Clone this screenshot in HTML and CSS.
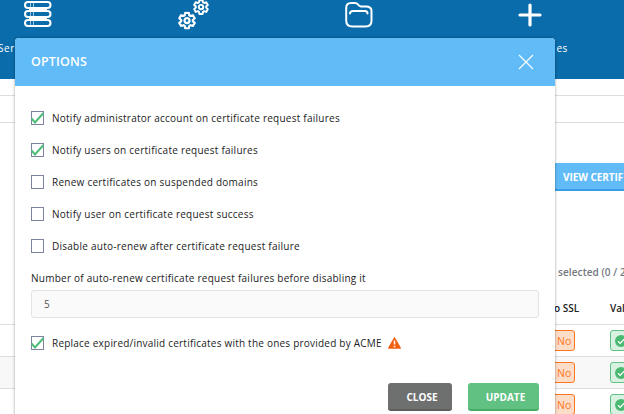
FILE: index.html
```html
<!DOCTYPE html>
<html lang="en">
<head>
<meta charset="utf-8">
<title>Options</title>
<link rel="stylesheet" href="styles.css">
</head>
<body>
<svg class="defs" width="0" height="0" aria-hidden="true">
<symbol id="gear" viewBox="0 0 18 18"><path d="M7.2 1.3h3.6l.5 2.5 1.2.7 2.4-.8 1.8 3.1-1.9 1.7v1.2l1.9 1.7-1.8 3.1-2.4-.8-1.2.7-.5 2.4H7.2l-.5-2.4-1.2-.7-2.4.8-1.8-3.1 1.9-1.7V8.500L1.300 6.800l1.800-3.100 2.400.8 1.200-.7z"/><circle cx="9" cy="9.100" r="2.500"/></symbol>
<symbol id="ok" viewBox="0 0 12 12"><circle cx="6" cy="6" r="6" fill="#4cb973"/><path d="M3 6.200l2.200 2.200 4-4.300" fill="none" stroke="#fff" stroke-width="1.300"/></symbol>
</svg>
<div class="page">
<header class="nav">
<div class="nav-item servers">
<svg width="28" height="27" viewBox="0 0 28 27"><g fill="none" stroke="#fff" stroke-width="2"><rect x="1" y="1" width="25.500" height="6" rx="3"/><rect x="1" y="10" width="25.500" height="6" rx="3"/><rect x="1" y="19" width="25.500" height="6" rx="3"/></g><path d="M6.500 2v4M9.500 2v4M6.500 11v4M9.500 11v4M6.500 20v4M9.500 20v4" stroke="#9cc5df"/><path d="M5 8.500h18M5 17.500h18" stroke="#fff"/></svg>
<span>Ser</span></div>
<div class="nav-item gears">
<svg width="32" height="32" viewBox="0 0 32 32" fill="none" stroke="#fff" stroke-width="2.200" stroke-linejoin="round"><use href="#gear" x="0" y="12.500" width="18" height="18"/><use href="#gear" x="15" y="0" width="16" height="16"/></svg></div>
<div class="nav-item folder">
<svg width="28" height="26" viewBox="0 0 28 26" fill="none" stroke="#fff" stroke-width="2" stroke-linecap="round" stroke-linejoin="round"><path d="M1.200 6Q1.200 1 6 1h4Q12 1 13 2.500T16 4.500h5Q26.500 4.500 26.500 9v9.500Q26.500 24.500 20.500 24.500h-13Q1.200 24.500 1.200 18.500z"/><path d="M5 11.500Q5 9 8 9H20Q22.500 9 22.500 11.500"/></svg></div>
<div class="nav-item add">
<svg width="24" height="24" viewBox="0 0 24 24" stroke="#fff" stroke-width="3.200" stroke-linecap="round"><path d="M12 2v20M2 12h20"/></svg>
<span>es</span></div>
</header>
<div class="crumb"></div>
<div class="bar"></div>
<div class="action"><span class="view">VIEW CERTIF</span></div>
<div class="selected">selected (0 / 2</div>
<div class="row head"><span class="ssl">o SSL</span><span class="val">Val</span></div>
<div class="row"><span class="tag no">No</span><span class="tag yes"><svg width="12" height="12"><use href="#ok"/></svg></span></div>
<div class="row alt"><span class="tag no">No</span><span class="tag yes"><svg width="12" height="12"><use href="#ok"/></svg></span></div>
<div class="row"><span class="tag no">No</span><span class="tag yes"><svg width="12" height="12"><use href="#ok"/></svg></span></div>
</div>

<div class="modal" role="dialog">
<div class="modal-head"><h1>OPTIONS</h1><svg width="16" height="16" viewBox="0 0 16 16" stroke="#fff" stroke-width="1.100"><path d="M1 1l14 14M15 1L1 15"/></svg></div>
<div class="modal-body">
<div class="opt"><i class="box"><svg viewBox="0 0 13 14"><path d="M.5 7.500l3.500 4L12.500 2"/></svg></i><span>Notify administrator account on certificate request failures</span></div>
<div class="opt"><i class="box"><svg viewBox="0 0 13 14"><path d="M.5 7.500l3.500 4L12.500 2"/></svg></i><span>Notify users on certificate request failures</span></div>
<div class="opt"><i class="box"></i><span>Renew certificates on suspended domains</span></div>
<div class="opt"><i class="box"></i><span>Notify user on certificate request success</span></div>
<div class="opt"><i class="box"></i><span>Disable auto-renew after certificate request failure</span></div>
<div class="label"><span>Number of auto-renew certificate request failures before disabling it</span></div>
<div class="field">5</div>
<div class="opt last"><i class="box"><svg viewBox="0 0 13 14"><path d="M.5 7.500l3.500 4L12.500 2"/></svg></i><span>Replace expired/invalid certificates with the ones provided by ACME</span><svg class="warn" width="13" height="12" viewBox="0 0 13 12"><path d="M6.500 1L12.200 11H.8z" fill="#f26111" stroke="#f26111" stroke-width="1.500" stroke-linejoin="round"/><path d="M6.500 3.500v4M6.500 8.700v1.500" stroke="#fff" stroke-width="1.500"/></svg></div>
<div class="buttons"><span class="btn close">CLOSE</span><span class="btn update">UPDATE</span></div>
</div>
</div>
</body>
</html>
```
FILE: styles.css
```css
* { box-sizing: border-box; }
body { margin: 0; width: 624px; height: 414px; overflow: hidden; position: relative; background: #fff; font-family: "Open Sans", sans-serif; font-size: 10px; color: #222; }
.defs { display: block; height: 0; }
.page { height: 414px; overflow: hidden; }
.nav { height: 79px; background: #0a6caa; display: flex; color: #fff; }
.nav-item { display: flex; flex-direction: column; align-items: center; white-space: nowrap; flex: none; }
.nav-item span { font-size: 10px; line-height: 14px; letter-spacing: .6px; }
.servers { width: 75px; padding-top: 1px; }
.servers span { align-self: flex-start; margin: 13px 0 0 -2px; }
.gears { width: 239px; }
.folder { width: 90px; padding-top: 2px; }
.add { width: 164px; padding: 3px 0 0 88px; }
.gears svg { margin: -1px 1px 0 0; }
.add span { align-self: flex-end; margin-top: 14px; }
.crumb { height: 17px; border-bottom: 1px solid #ddd; }
.bar { height: 27px; border-bottom: 1px solid #ddd; }
.action { height: 68px; padding: 40px 0 0 555px; }
.view { display: block; height: 28px; padding-left: 8px; background: #60bbf6; border-bottom: 2px solid #389fe4; color: #fff; font-weight: 700; font-size: 10px; line-height: 29px; letter-spacing: -.05px; white-space: nowrap; }
.selected { height: 101px; padding: 74px 0 0 558px; font-weight: 600; line-height: 14px; color: #72787e; letter-spacing: .1px; white-space: nowrap; }
.row { height: 32px; border-bottom: 1px solid #ddd; display: flex; align-items: center; padding-left: 550px; white-space: nowrap; }
.head { height: 33px; font-weight: 600; }
.alt { background: #f8f8f8; }
.ssl { width: 60px; padding-left: 4px; flex: none; }
.tag { height: 21px; border-radius: 3px; border: 1px solid; flex: none; }
.no { width: 25px; padding-left: 6px; margin-right: 35px; color: #fb7720; background: #fddcc8; line-height: 20px; font-size: 10.5px; }
.yes { width: 30px; color: #5dc486; background: #d9f1e1; padding: 4px; }
.yes svg { display: block; }
.modal { position: absolute; left: 15px; top: 38px; width: 540px; height: 390px; background: #fff; border-radius: 4px 4px 0 0; box-shadow: 0 0 3px rgba(0,0,0,.4); }
.modal-head { height: 48px; padding: 0 21px 0 16px; background: #60bbf6; border-radius: 4px 4px 0 0; display: flex; align-items: center; justify-content: space-between; }
h1 { margin: 0; font-size: 12.5px; line-height: 48px; font-weight: 600; color: #fff; letter-spacing: .15px; }
.modal-body { padding: 16px 16px 0; }
.opt { height: 32px; display: flex; align-items: center; white-space: nowrap; letter-spacing: .25px; }
.opt span { margin-left: 8px; }
.box { width: 13px; height: 14px; border: 1px solid #7c84a0; flex: none; display: block; }
.box svg { display: block; width: 13px; height: 14px; margin: -1px; fill: none; stroke: #4dbd7a; stroke-width: 2; }
.label { height: 28px; padding-top: 9px; line-height: 14px; white-space: nowrap; letter-spacing: .25px; }
.field { height: 28px; padding-left: 12px; border: 1px solid #e3e3e6; border-radius: 3px; background: #fafafa; line-height: 27px; color: #555; }
.last { height: 32px; margin-top: 9px; letter-spacing: .22px; }
.warn { margin-left: 6px; }
.buttons { display: flex; justify-content: flex-end; gap: 16px; margin-top: 24px; }
.btn { height: 28px; border-radius: 3px; color: #fff; font-weight: 700; line-height: 28px; text-align: center; letter-spacing: 0; }
.close { width: 64px; padding-left: 4px; background: #6e706f; border-bottom: 2px solid #5d5f5e; }
.update { width: 71px; padding-left: 4px; background: #60c182; border-bottom: 2px solid #47ad69; }
```
